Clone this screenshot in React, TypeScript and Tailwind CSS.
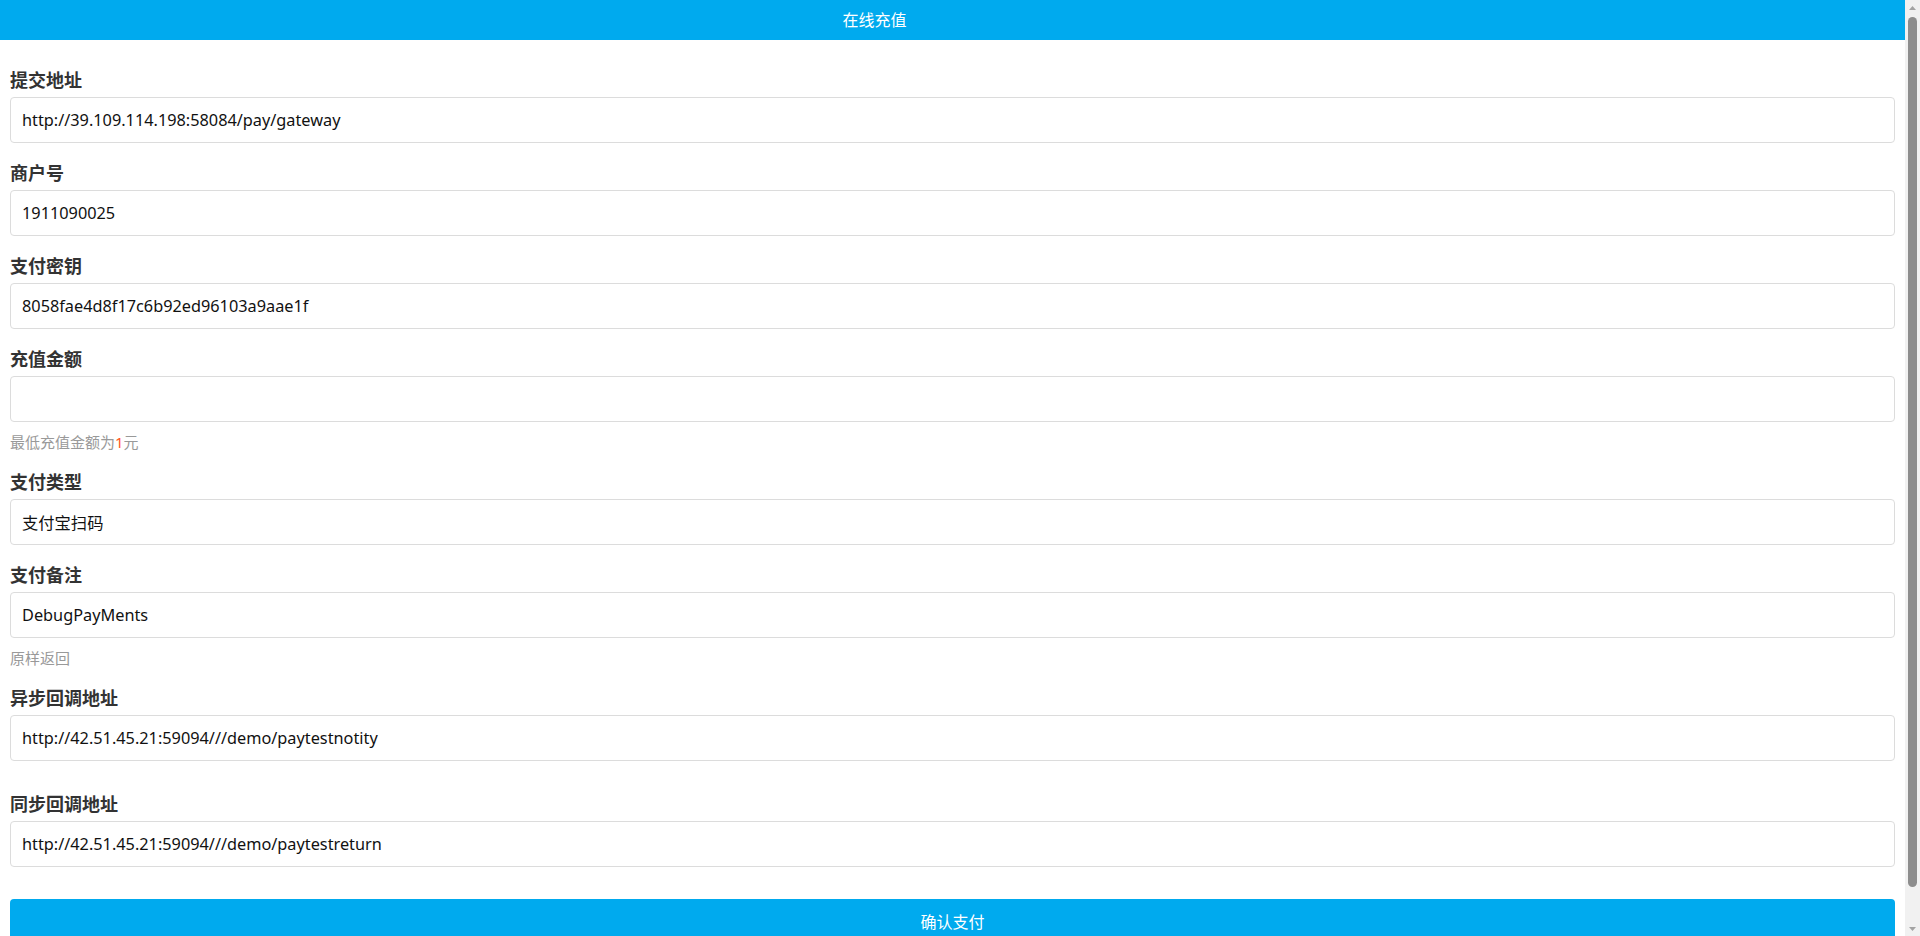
import React from "react";

const font = { fontFamily: '"Noto Sans", "Noto Sans CJK SC", sans-serif' };

function Field({
  label,
  value,
  help,
  mb = "mb-[18px]",
}: {
  label: string;
  value: string;
  help?: React.ReactNode;
  mb?: string;
}) {
  return (
    <div className={mb}>
      <label className="block text-[18px] leading-[24px] font-bold text-[#333] mb-[5px]">
        {label}
      </label>
      <input
        readOnly
        defaultValue={value}
        className="block w-full h-[46px] border border-[#dcdcdc] rounded-[4px] px-[11px] text-[16.3px] text-[#111] bg-white outline-none"
        style={font}
      />
      {help && (
        <p className="mt-[10px] text-[15px] leading-[20px] text-[#999]">{help}</p>
      )}
    </div>
  );
}

function Scrollbar() {
  return (
    <div className="w-[15px] h-full bg-[#f1f1f1] flex flex-col items-center shrink-0">
      <div className="h-[15px] w-full flex items-center justify-center">
        <svg width="7" height="4" viewBox="0 0 7 4">
          <polygon points="0,4 3.5,0 7,4" fill="#a3a3a3" />
        </svg>
      </div>
      <div className="w-[9px] h-[870px] mt-[2px] rounded-[5px] bg-[#8d8d8d]" />
      <div className="flex-1" />
      <div className="h-[15px] w-full flex items-center justify-center">
        <svg width="7" height="4" viewBox="0 0 7 4">
          <polygon points="0,0 3.5,4 7,0" fill="#a3a3a3" />
        </svg>
      </div>
    </div>
  );
}

export default function App() {
  return (
    <div className="bg-white h-[936px] flex overflow-hidden" style={font}>
      <div className="flex-1 min-w-0 h-full overflow-hidden">
        <div className="h-[40px] bg-[#00aaee] text-white text-[16px] flex items-center justify-center pr-[156px]">
          在线充值
        </div>
        <div className="px-[10px] pt-[28px] pb-[25px]">
          <Field label="提交地址" value="http://39.109.114.198:58084/pay/gateway" />
          <Field label="商户号" value="1911090025" />
          <Field label="支付密钥" value="8058fae4d8f17c6b92ed96103a9aae1f" />
          <Field
            label="充值金额"
            value=""
            help={
              <>
                最低充值金额为<span className="text-[#ff5722]">1</span>元
              </>
            }
          />
          <Field label="支付类型" value="支付宝扫码" />
          <Field label="支付备注" value="DebugPayMents" help="原样返回" />
          <Field
            label="异步回调地址"
            value="http://42.51.45.21:59094///demo/paytestnotity"
            mb="mb-[31px]"
          />
          <Field
            label="同步回调地址"
            value="http://42.51.45.21:59094///demo/paytestreturn"
            mb="mb-[32px]"
          />
          <button className="block w-full h-[46px] rounded-[4px] bg-[#00aaee] text-white text-[16px]">
            确认支付
          </button>
        </div>
      </div>
      <Scrollbar />
    </div>
  );
}
